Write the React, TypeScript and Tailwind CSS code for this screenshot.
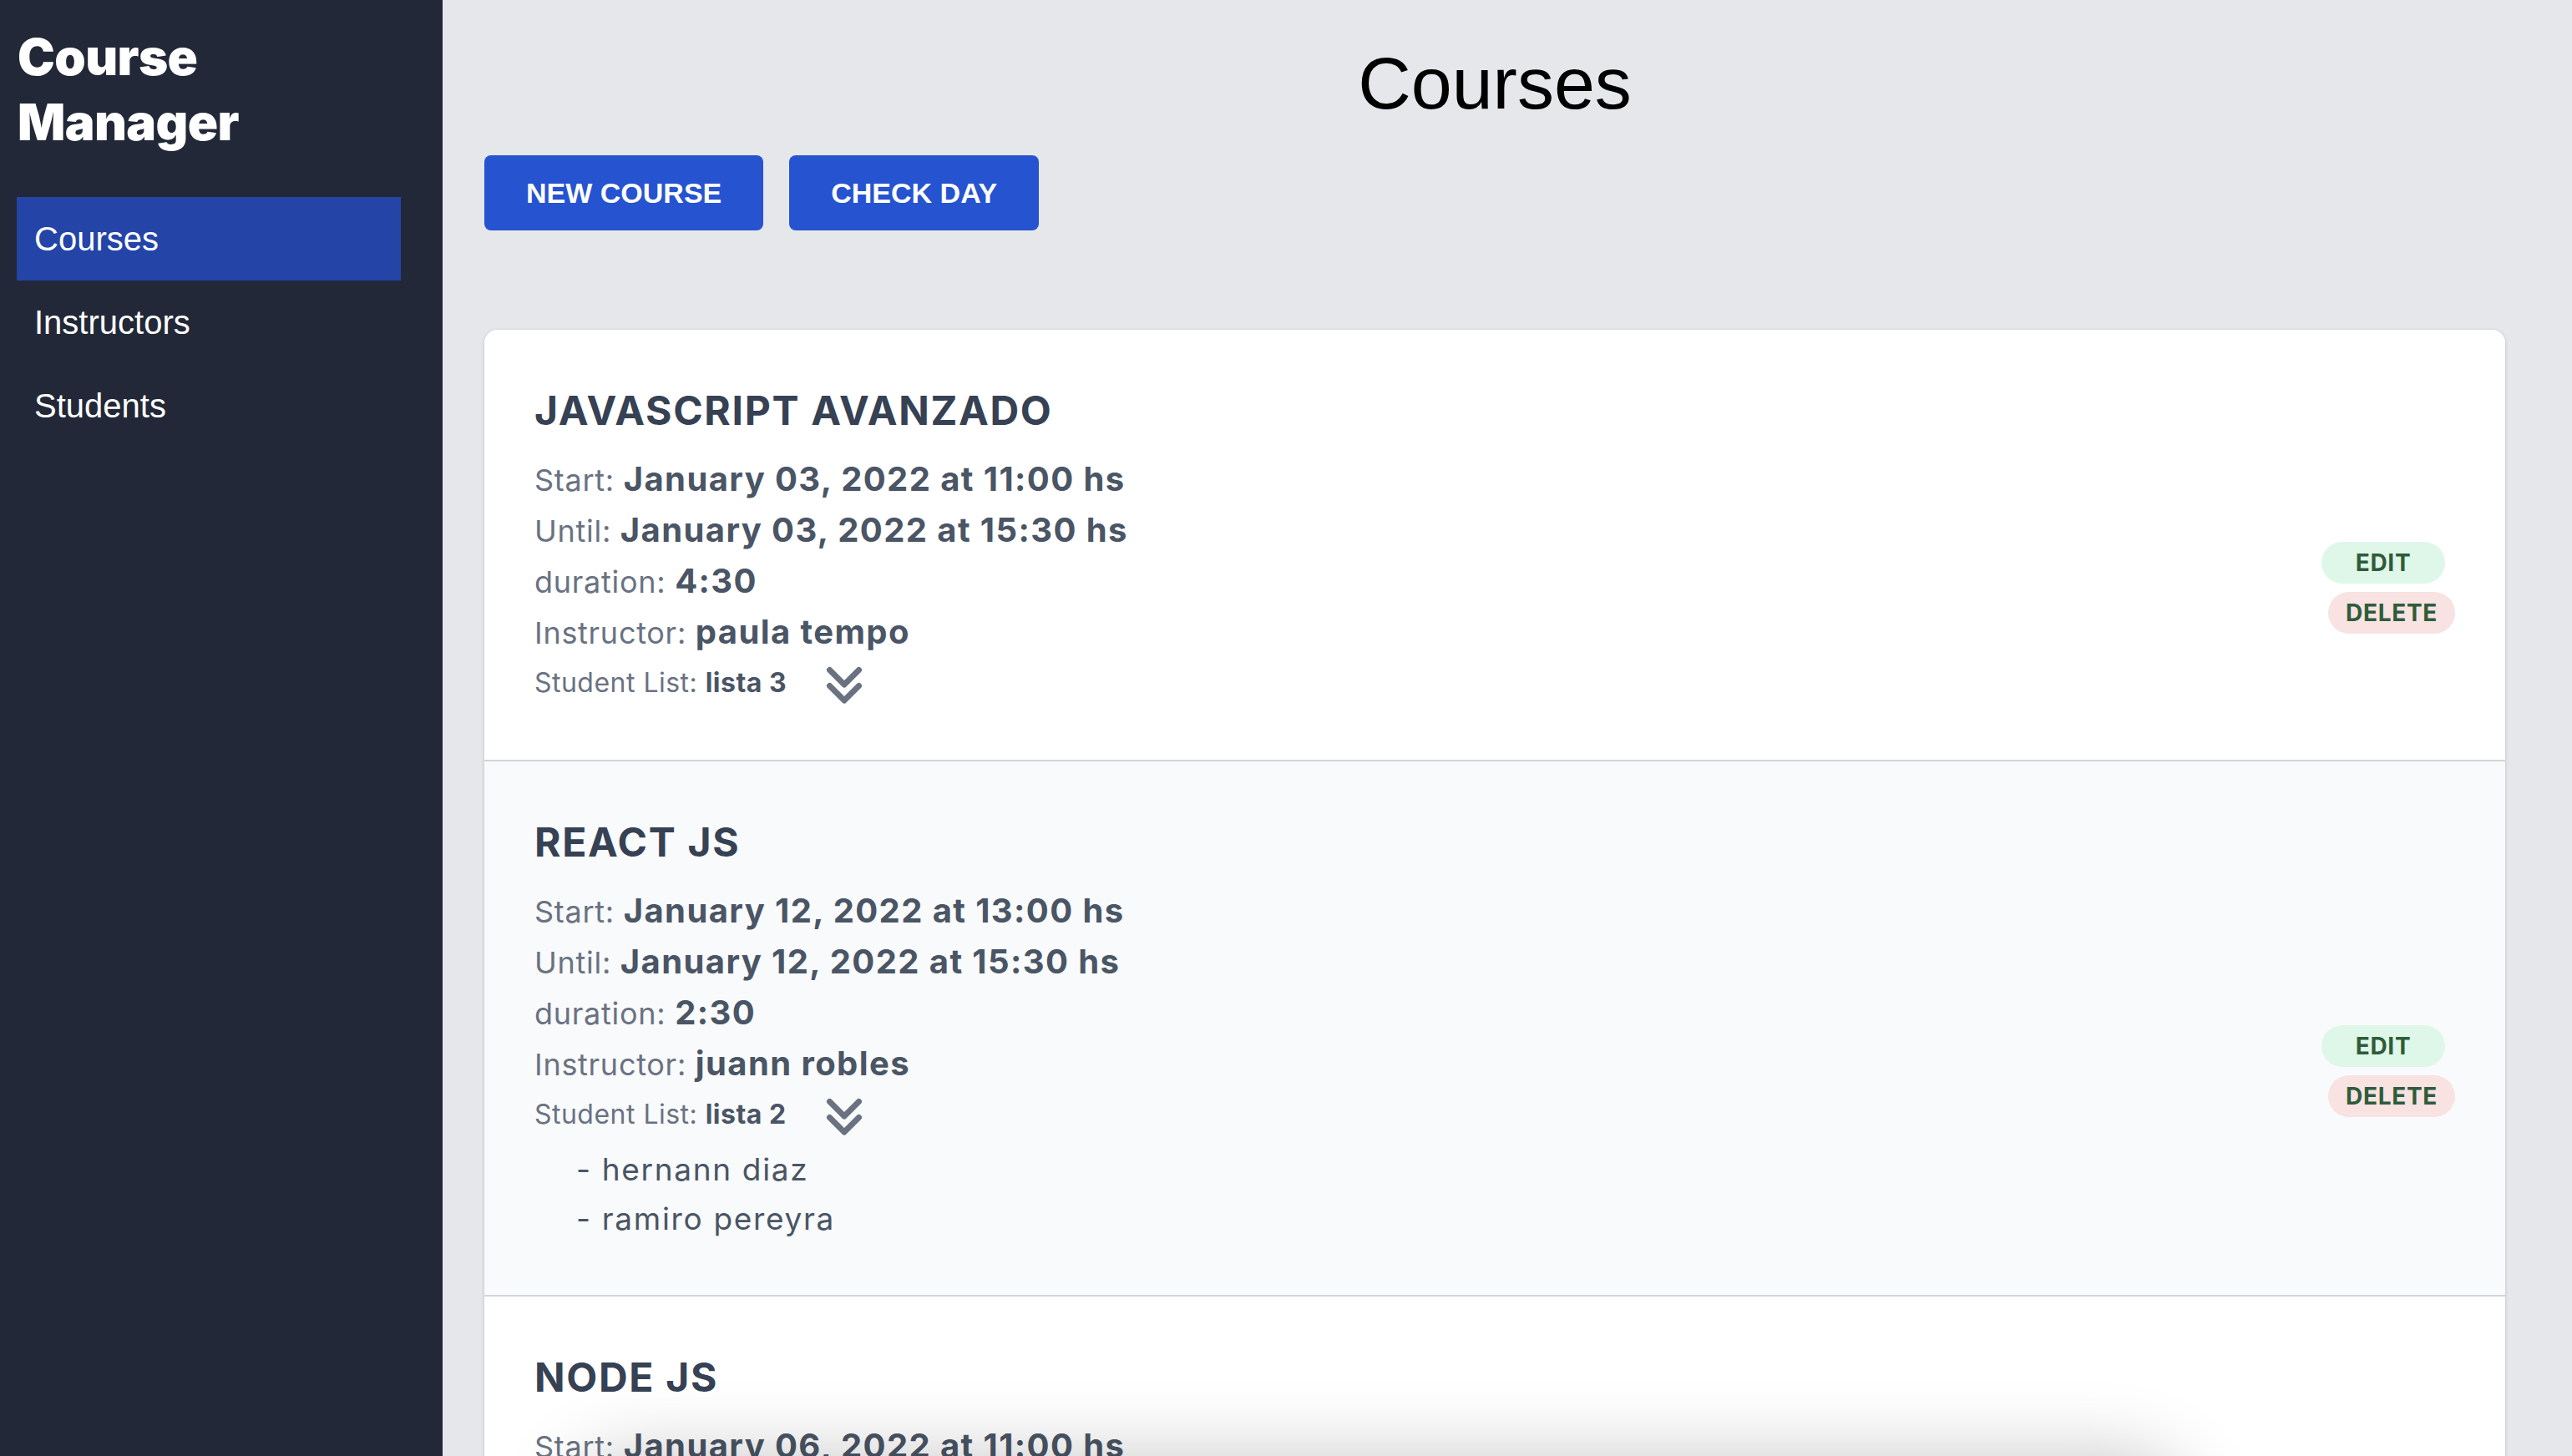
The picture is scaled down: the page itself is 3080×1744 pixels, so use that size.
import React from 'react';

interface Course {
  id: number;
  name: string;
  start: string;
  until: string;
  duration: string;
  instructor: string;
  list: string;
  students?: string[];
}

const courses: Course[] = [
  {
    id: 1,
    name: 'JAVASCRIPT AVANZADO',
    start: 'January 03, 2022 at 11:00 hs',
    until: 'January 03, 2022 at 15:30 hs',
    duration: '4:30',
    instructor: 'paula tempo',
    list: 'lista 3',
  },
  {
    id: 2,
    name: 'REACT JS',
    start: 'January 12, 2022 at 13:00 hs',
    until: 'January 12, 2022 at 15:30 hs',
    duration: '2:30',
    instructor: 'juann robles',
    list: 'lista 2',
    students: ['hernann diaz', 'ramiro pereyra'],
  },
  {
    id: 3,
    name: 'NODE JS',
    start: 'January 06, 2022 at 11:00 hs',
    until: 'January 06, 2022 at 14:00 hs',
    duration: '3:00',
    instructor: 'paula tempo',
    list: 'lista 1',
  },
];

const ChevronDoubleDown = () => (
  <svg
    width="48"
    height="48"
    viewBox="0 0 48 48"
    fill="none"
    stroke="currentColor"
    strokeWidth="7"
    strokeLinecap="round"
    strokeLinejoin="round"
    className="ml-[45px] mt-[8px] shrink-0 text-gray-500"
  >
    <path d="M6.5 4.5 24 22 41.5 4.5" />
    <path d="M6.5 23.5 24 41 41.5 23.5" />
  </svg>
);

const Row = ({ label, value }: { label: string; value: string }) => (
  <div className="text-[36px] leading-[59px] tracking-[0.02em] text-gray-500">
    {label}: <span className="text-[40px] font-bold tracking-[0.035em] text-gray-600">{value}</span>
  </div>
);

const CourseCard = ({ course, striped }: { course: Course; striped: boolean }) => (
  <div className={`flex justify-between pl-[60px] pr-[60px] pt-[65px] pb-[62px] ${striped ? 'bg-gray-50' : 'bg-white'}`}>
    <div>
      <h3 className="text-[48px] font-bold leading-[64px] tracking-[0.035em] text-gray-700">{course.name}</h3>
      <div className="mt-[20px]">
        <Row label="Start" value={course.start} />
        <Row label="Until" value={course.until} />
        <Row label="duration" value={course.duration} />
        <Row label="Instructor" value={course.instructor} />
        <div className="flex h-[60px] items-center">
          <span className="text-[32px] leading-[48px] tracking-[0.015em] text-gray-500">
            Student List: <span className="font-bold text-gray-600">{course.list}</span>
          </span>
          <ChevronDoubleDown />
        </div>
        {course.students && (
          <ul className="ml-[50px] mt-[6px]">
            {course.students.map(s => (
              <li key={s} className="text-[37px] leading-[59px] tracking-[0.045em] text-gray-600">- {s}</li>
            ))}
          </ul>
        )}
      </div>
    </div>
    <div className="mt-[100px] flex flex-col items-end gap-[10px] self-center">
      <button className="mr-[12px] h-[50px] w-[148px] rounded-full bg-[#dff7e8] text-[28px] font-bold tracking-wide text-[#2e5c3a]">EDIT</button>
      <button className="h-[50px] w-[152px] rounded-full bg-[#f8e2e2] text-[28px] font-bold tracking-wide text-[#2e5c3a]">DELETE</button>
    </div>
  </div>
);

export default function App() {
  const nav = ['Courses', 'Instructors', 'Students'];

  return (
    <div className="flex h-screen overflow-hidden bg-gray-200 font-['Inter','Noto_Sans',sans-serif]">
      <aside className="w-[530px] shrink-0 bg-[#222837] pl-[20px] pr-[50px] pt-[29px]">
        <h1 className="pl-px font-['Inter',sans-serif] text-[60px] font-black leading-[78px] tracking-[-0.01em] text-white">
          Course
          <br />
          Manager
        </h1>
        <nav className="mt-[51px] font-['Liberation_Sans',Arial,sans-serif] text-[40px] text-white">
          {nav.map((item, i) => (
            <div key={item} className={`h-[100px] px-[21px] leading-[100px] ${i === 0 ? 'bg-[#2444a8]' : ''}`}>
              {item}
            </div>
          ))}
        </nav>
      </aside>

      <main className="min-w-0 flex-1 pl-[50px] pr-[80px] pt-[50px]">
        <h2 className="text-center font-['Liberation_Sans',Arial,sans-serif] text-[88px] leading-[100px] text-black">Courses</h2>
        <div className="mt-[36px] flex gap-[31px] font-['Liberation_Sans',Arial,sans-serif]">
          <button className="h-[90px] rounded-[8px] bg-[#2653cf] px-[50px] text-[34px] font-bold text-white">NEW COURSE</button>
          <button className="h-[90px] rounded-[8px] bg-[#2653cf] px-[50px] text-[34px] font-bold text-white">CHECK DAY</button>
        </div>

        <section className="mt-[119px] divide-y-2 divide-[#d1d5db] overflow-hidden rounded-t-2xl bg-white shadow-[0_1px_4px_rgba(0,0,0,0.18)]">
          {courses.map((c, i) => (
            <CourseCard key={c.id} course={c} striped={i % 2 === 1} />
          ))}
        </section>
      </main>

      <div className="pointer-events-none fixed left-[700px] top-[1764px] h-[300px] w-[1900px] rounded-[60px] bg-white shadow-[0_0_90px_20px_rgba(0,0,0,0.22)]" />
    </div>
  );
}
